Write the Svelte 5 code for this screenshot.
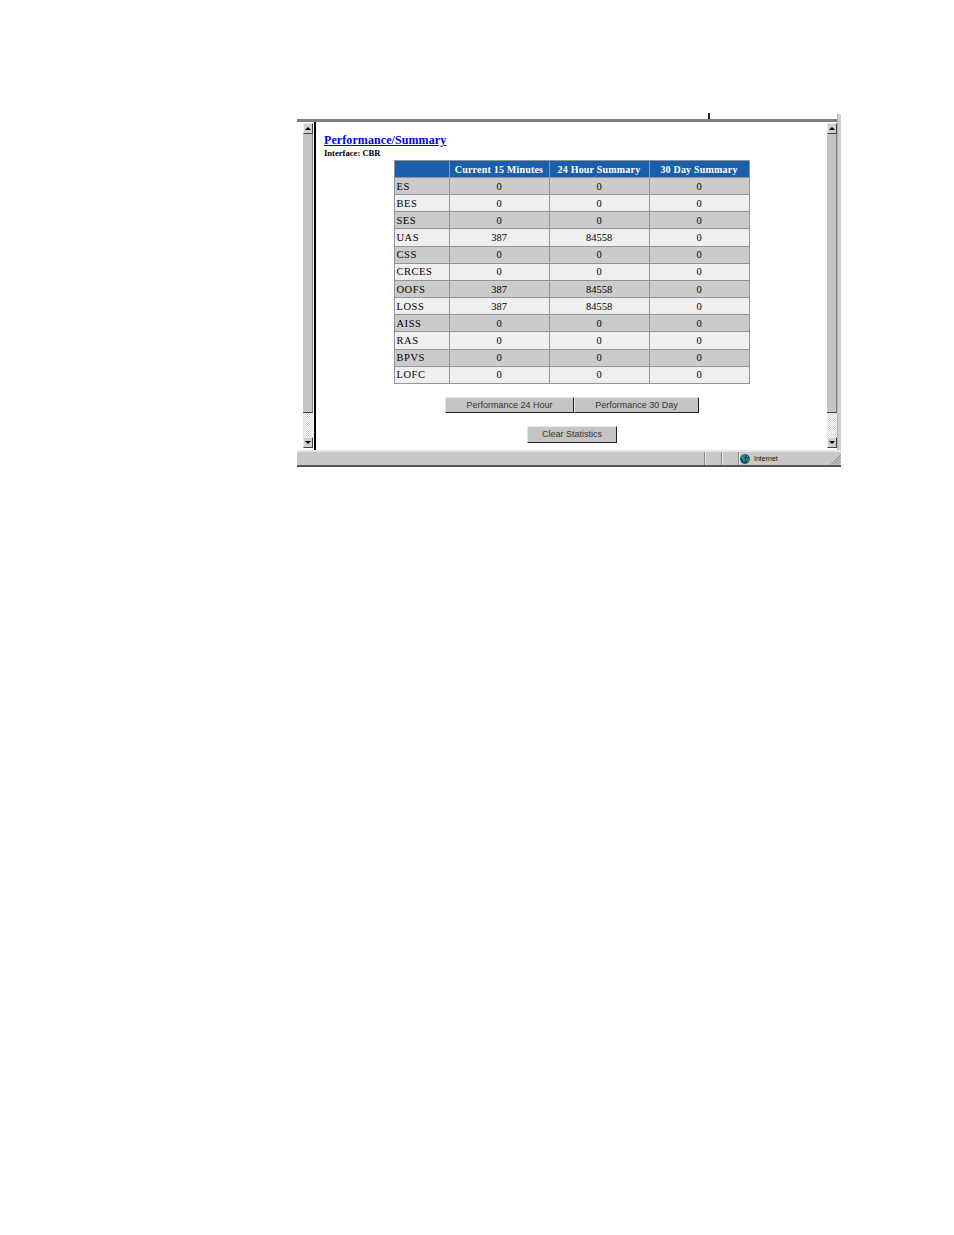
<script lang="ts">
  const rows = [
    ["ES", "0", "0", "0"],
    ["BES", "0", "0", "0"],
    ["SES", "0", "0", "0"],
    ["UAS", "387", "84558", "0"],
    ["CSS", "0", "0", "0"],
    ["CRCES", "0", "0", "0"],
    ["OOFS", "387", "84558", "0"],
    ["LOSS", "387", "84558", "0"],
    ["AISS", "0", "0", "0"],
    ["RAS", "0", "0", "0"],
    ["BPVS", "0", "0", "0"],
    ["LOFC", "0", "0", "0"],
  ];
</script>

<div class="page">
  <div class="window">
    <span class="tick"></span>
    <span class="edge"></span>
    <div class="topline"></div>
    <div class="main">
      <div class="scroll left">
        <div class="arrow"><span class="up"></span></div>
        <div class="thumb"></div>
        <div class="track"></div>
        <div class="arrow"><span class="down"></span></div>
      </div>
      <div class="content">
        <a class="title" href="#top">Performance/Summary</a>
        <div class="iface">Interface: CBR</div>
        <table>
          <thead>
            <tr>
              <th class="c0"></th>
              <th class="c1">Current 15 Minutes</th>
              <th class="c2">24 Hour Summary</th>
              <th class="c2">30 Day Summary</th>
            </tr>
          </thead>
          <tbody>
            {#each rows as r, i}
              <tr class:alt={i % 2 == 1}>
                <td class="name">{r[0]}</td>
                <td>{r[1]}</td>
                <td>{r[2]}</td>
                <td>{r[3]}</td>
              </tr>
            {/each}
          </tbody>
        </table>
        <div class="btns one">
          <button class="b24">Performance 24 Hour</button>
          <button class="b30">Performance 30 Day</button>
        </div>
        <div class="btns two">
          <button class="clear">Clear Statistics</button>
        </div>
      </div>
      <div class="scroll right">
        <div class="arrow"><span class="up"></span></div>
        <div class="thumb"></div>
        <div class="track"></div>
        <div class="arrow"><span class="down"></span></div>
      </div>
    </div>
    <div class="status">
      <div class="cell grow"></div>
      <div class="cell small"></div>
      <div class="cell small"></div>
      <div class="cell zone">
        <svg width="10" height="10" viewBox="0 0 10 10">
          <circle cx="5" cy="5" r="4.8" fill="#16309c" />
          <path d="M1.5 1.5l3-1.2 1.5 2-2 1.3 1.5 1.6-1 3-1.5-.4-.5-2.6-2-1.6zM6 4.5l3.6-.3-.4 3-2 1.4-1-1.5z" fill="#1f9a3c" />
          <path d="M6.5 1l2 1.5-1.5.8z" fill="#45b35a" />
        </svg>
        <span>Internet</span>
      </div>
      <div class="grip">
        <svg width="11" height="11" viewBox="0 0 11 11">
          <path d="M10.5 1L1 10.5M10.5 4L4 10.5M10.5 7L7 10.5" stroke="#808080" fill="none" />
        </svg>
      </div>
    </div>
  </div>
</div>

<style>
  :global(body) {
    background: #fff;
  }
  .page {
    height: 1235px;
    padding: 119px 0 0 297px;
    box-sizing: border-box;
  }
  .window {
    position: relative;
    width: 544px;
    height: 348px;
    display: flex;
    flex-direction: column;
  }
  .tick {
    position: absolute;
    left: 411px;
    top: -6px;
    width: 2px;
    height: 6px;
    background: #222;
  }
  .edge {
    position: absolute;
    right: 0;
    top: -5px;
    bottom: 17px;
    width: 4px;
    background: #cfcfcf;
    box-shadow: inset 1px 0 0 #b4b4b4;
  }
  .topline {
    height: 3px;
    background: #808080;
    flex: none;
    margin-right: 4px;
  }
  .main {
    flex: 1;
    display: flex;
    min-height: 0;
    padding-right: 4px;
  }
  .scroll {
    width: 10px;
    display: flex;
    flex-direction: column;
    flex: none;
    margin-top: 1px;
    margin-bottom: 2px;
  }
  .scroll.left {
    margin-left: 6px;
    margin-right: 1px;
  }
  .arrow {
    height: 11px;
    background: #d0d0d0;
    border-top: 1px solid #eee;
    border-left: 1px solid #eee;
    border-right: 1px solid #404040;
    border-bottom: 1px solid #404040;
    box-sizing: border-box;
    display: flex;
    align-items: center;
    justify-content: center;
    flex: none;
  }
  .up {
    border: 3px solid transparent;
    border-top: 0;
    border-bottom: 3px solid #000;
  }
  .down {
    border: 3px solid transparent;
    border-bottom: 0;
    border-top: 3px solid #000;
  }
  .thumb {
    flex: none;
    height: 279px;
    background: #c4c4c4;
    border-right: 1px solid #808080;
    border-bottom: 1px solid #404040;
    box-sizing: border-box;
  }
  .track {
    flex: 1;
    background: repeating-conic-gradient(#d2d2d2 0 25%, #fff 0 50%) 0 0 / 2px 2px;
  }
  .content {
    flex: 1;
    min-width: 0;
    border-left: 2px solid #000;
    padding: 12px 0 0 8px;
    background: #fff;
    font-family: "Liberation Serif", serif;
    color: #000;
  }
  .title {
    display: block;
    width: fit-content;
    font-size: 12px;
    line-height: 13px;
    font-weight: bold;
    color: #0000ee;
    letter-spacing: 0.007em;
  }
  .iface {
    font-size: 8.6px;
    line-height: 10px;
    margin-top: 1px;
    font-weight: bold;
  }
  table {
    border-collapse: collapse;
    table-layout: fixed;
    width: 355px;
    height: 224px;
    margin: 2px 0 0 69.5px;
    font-size: 10.5px;
  }
  th,
  td {
    padding: 0;
    height: 17px;
    box-sizing: border-box;
    border: 1px solid #949494;
    text-align: center;
    font-weight: normal;
    overflow: hidden;
    white-space: nowrap;
  }
  th {
    background: #1a5fab;
    color: #fff;
    font-size: 10px;
    font-weight: bold;
    letter-spacing: 0.02em;
  }
  .c0 {
    width: 55px;
  }
  .c1,
  .c2 {
    width: 100px;
  }
  tbody tr {
    background: #cbcbcb;
  }
  tbody tr.alt {
    background: #efefef;
  }
  td.name {
    text-align: left;
    padding-left: 2px;
    letter-spacing: 0.05em;
  }
  .btns {
    display: flex;
    font-size: 0;
  }
  .one {
    margin: 13px 0 0 121px;
  }
  .two {
    margin: 13px 0 0 203px;
  }
  button {
    font-family: "Liberation Sans", Arial, sans-serif;
    font-size: 9px;
    height: 16px;
    padding: 0;
    margin: 0;
    background: #c4c4c4;
    color: #333;
    border: 0;
    border-top: 1px solid #e8e8e8;
    border-left: 1px solid #e8e8e8;
    border-right: 1px solid #222;
    border-bottom: 1px solid #222;
    border-radius: 0;
    box-sizing: border-box;
  }
  .b24 {
    width: 129px;
  }
  .b30 {
    width: 125px;
  }
  .clear {
    width: 90px;
    height: 17px;
    padding-bottom: 2px;
  }
  .status {
    flex: none;
    height: 17px;
    display: flex;
    background: #c8c8c8;
    border-top: 2px solid #e6e6e6;
    border-bottom: 2px solid #555;
    box-sizing: border-box;
    font-family: "Liberation Sans", Arial, sans-serif;
    font-size: 7px;
    color: #111;
  }
  .cell {
    border-left: 1px solid #8c8c8c;
    box-shadow: inset 1px 0 0 #e8e8e8;
  }
  .grow {
    flex: 1;
    border-left: 0;
    box-shadow: none;
  }
  .small {
    width: 17px;
    box-sizing: border-box;
  }
  .zone {
    width: 92px;
    display: flex;
    align-items: center;
    gap: 4px;
    padding-left: 1px;
    box-sizing: border-box;
  }
  .grip {
    width: 11px;
    align-self: flex-end;
    line-height: 0;
  }
</style>
